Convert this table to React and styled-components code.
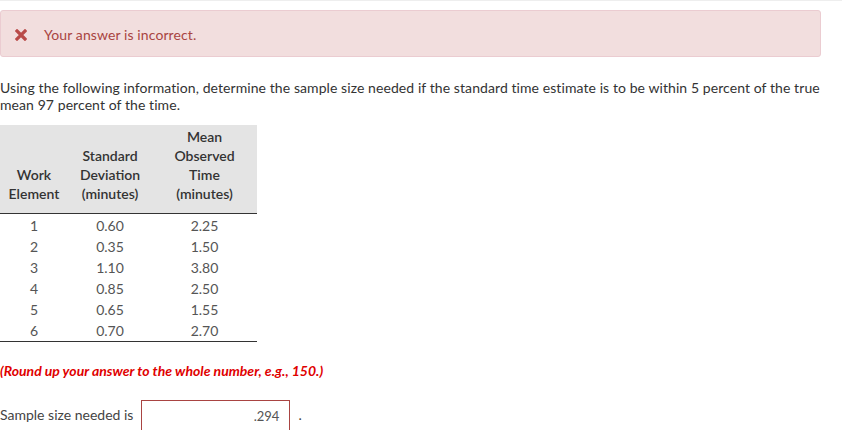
import React from "react";
import styled, { createGlobalStyle } from "styled-components";

const Global = createGlobalStyle`
  html, body { margin: 0; padding: 0; background: #fff; }
  body { font-family: Lato, "Open Sans", sans-serif; color: #333; }
`;

const Page = styled.div`
  width: 842px;
  height: 430px;
  overflow: hidden;
  border-top: 1px solid #eeeeee;
  box-sizing: border-box;
  padding-top: 9px;
`;

const Alert = styled.div`
  width: 821px;
  height: 47px;
  box-sizing: border-box;
  background: #f2dede;
  border: 1px solid #ebccd1;
  border-radius: 3px;
  display: flex;
  align-items: center;
  gap: 17px;
  padding: 2px 0 0 14px;
  color: #a94442;
  font-size: 14px;
  letter-spacing: 0.1px;
`;

const XIcon = styled.svg`
  width: 12px;
  height: 12px;
  flex: none;
`;

const Question = styled.p`
  margin: 22px 0 0;
  width: 830px;
  font-size: 14px;
  line-height: 17px;
  letter-spacing: 0.08px;
  color: #333;
`;

const Table = styled.table`
  margin-top: 12px;
  border-collapse: collapse;
  width: 257px;
  font-size: 14px;
`;

const HeadCell = styled.th`
  background: #e4e4e4;
  font-weight: 600;
  color: #333;
  text-align: center;
  vertical-align: bottom;
  line-height: 19px;
  padding: 2px 0 10px;
  width: ${(p) => p.$w}px;
  border-bottom: 1px solid #333;
`;

const Cell = styled.td`
  text-align: center;
  color: #555;
  line-height: 21px;
  padding: ${(p) => (p.$first ? "1px 0 0" : "0")};
  border-bottom: ${(p) => (p.$last ? "1px solid #333" : "none")};
`;

const Hint = styled.p`
  margin: 20px 0 0;
  color: #e00000;
  font-weight: 700;
  font-style: italic;
  font-size: 14px;
`;

const AnswerRow = styled.div`
  margin-top: 21px;
  display: flex;
  align-items: flex-start;
  font-size: 14px;
  color: #444;
`;

const Label = styled.span`
  padding-top: 6px;
`;

const Input = styled.div`
  margin-left: 8px;
  width: 149px;
  height: 34px;
  box-sizing: border-box;
  border: 1px solid #a94442;
  display: flex;
  align-items: flex-start;
  justify-content: flex-end;
  padding: 7px 10px 0;
  color: #555;
  font-size: 13px;
`;

const Dot = styled.span`
  margin-left: 8px;
  padding-top: 6px;
`;

const rows = [
  ["1", "0.60", "2.25"],
  ["2", "0.35", "1.50"],
  ["3", "1.10", "3.80"],
  ["4", "0.85", "2.50"],
  ["5", "0.65", "1.55"],
  ["6", "0.70", "2.70"],
];

export default function App() {
  return (
    <Page>
      <Global />
      <Alert>
        <XIcon viewBox="0 0 12 12">
          <path d="M2 2 L10 10 M10 2 L2 10" stroke="#b94a48" strokeWidth="3.2" strokeLinecap="square" />
        </XIcon>
        <span>Your answer is incorrect.</span>
      </Alert>
      <Question>
        Using the following information, determine the sample size needed if the standard time estimate is to be within 5 percent of the true mean 97 percent of the time.
      </Question>
      <Table>
        <thead>
          <tr>
            <HeadCell $w={68}>Work<br />Element</HeadCell>
            <HeadCell $w={84}>Standard<br />Deviation<br />(minutes)</HeadCell>
            <HeadCell $w={105}>Mean<br />Observed<br />Time<br />(minutes)</HeadCell>
          </tr>
        </thead>
        <tbody>
          {rows.map((r, i) => (
            <tr key={i}>
              {r.map((c, j) => (
                <Cell key={j} $first={i === 0} $last={i === rows.length - 1}>{c}</Cell>
              ))}
            </tr>
          ))}
        </tbody>
      </Table>
      <Hint>(Round up your answer to the whole number, e.g., 150.)</Hint>
      <AnswerRow>
        <Label>Sample size needed is</Label>
        <Input>.294</Input>
        <Dot>.</Dot>
      </AnswerRow>
    </Page>
  );
}
